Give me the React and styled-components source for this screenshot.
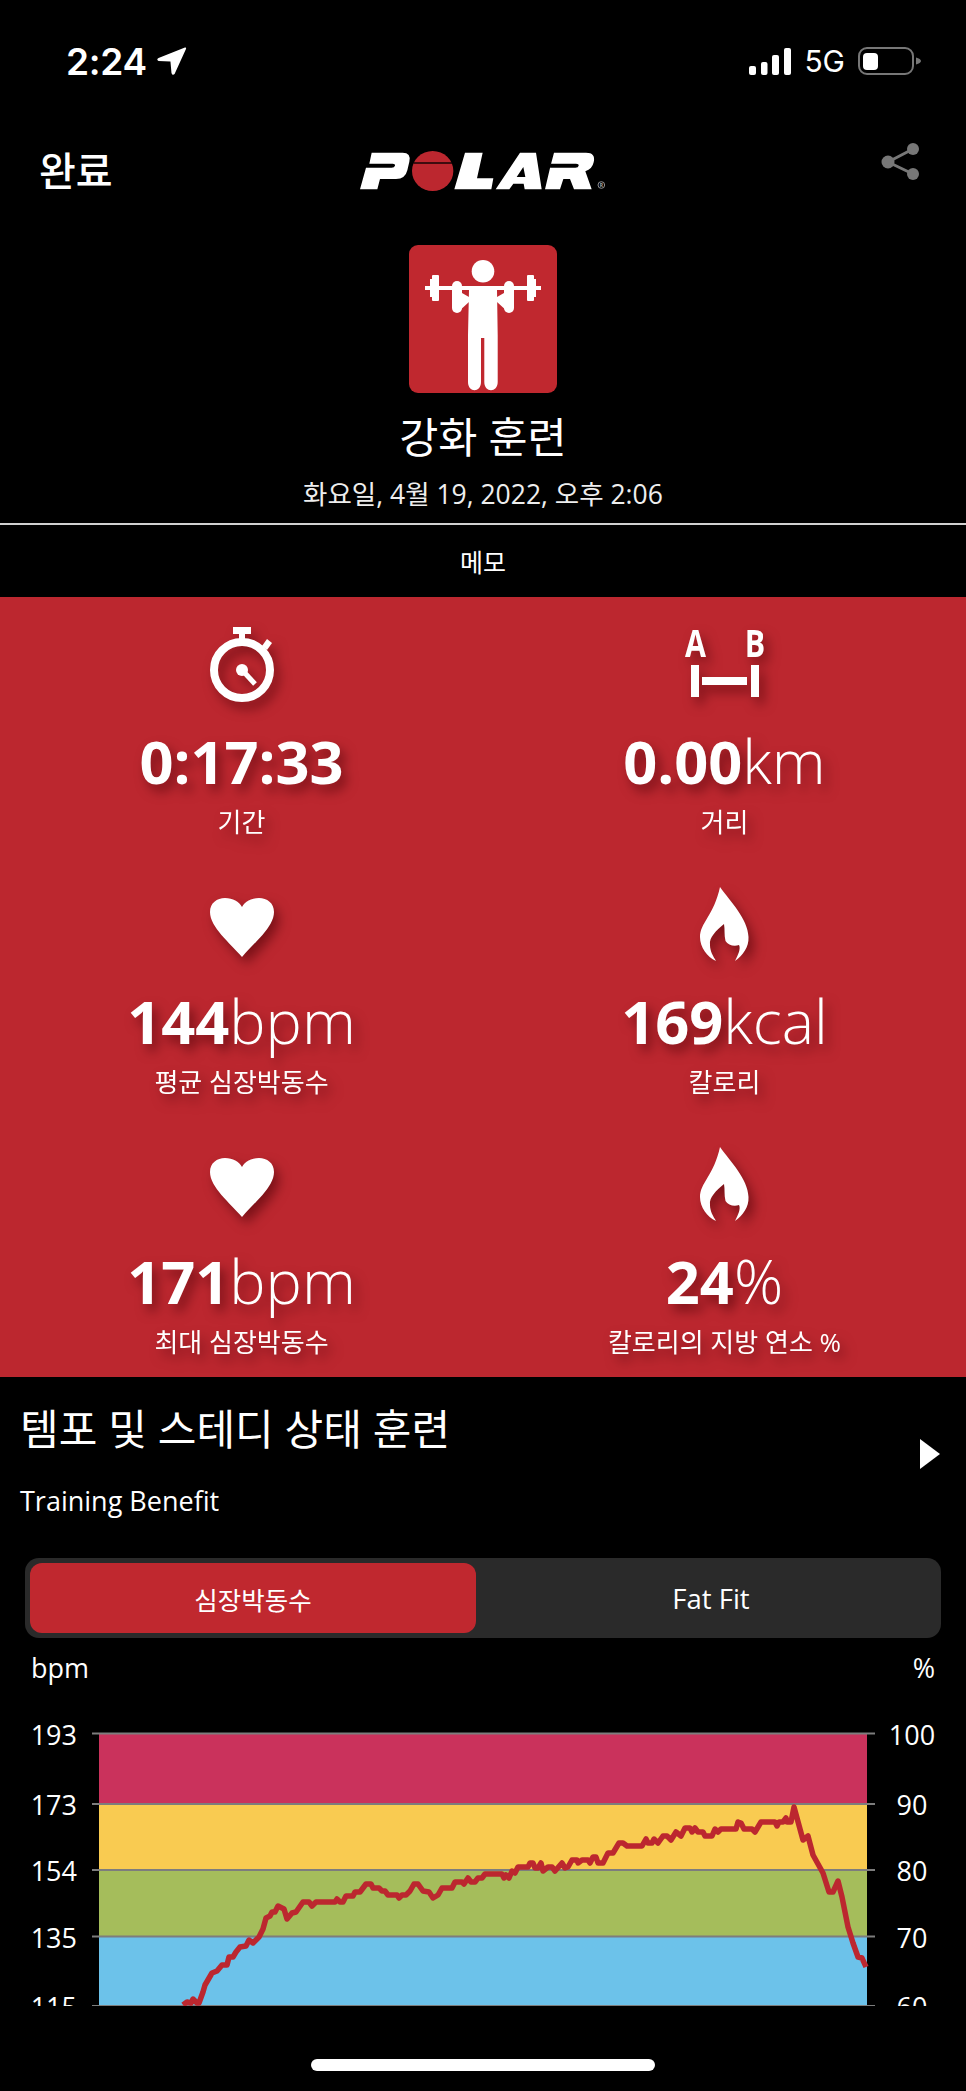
import React from 'react';
import styled, { createGlobalStyle } from 'styled-components';

const Global = createGlobalStyle`
  html, body { margin: 0; padding: 0; background: #000; }
  body { width: 966px; height: 2091px; overflow: hidden; font-family: "Open Sans", "Noto Sans CJK KR", sans-serif; color: #fff; }
`;
const Page = styled.div`width: 966px; height: 2091px; background: #000; overflow: hidden; position: relative;`;
const Status = styled.div`height: 122px; padding: 0 45px 0 66px; display: flex; justify-content: space-between; align-items: center; box-sizing: border-box;`;
const Clock = styled.div`display: flex; align-items: center; gap: 10px; font: 600 37px/1 Inter, sans-serif; letter-spacing: -.3px;`;
const StatusRight = styled.div`display: flex; align-items: center; gap: 13px; font: 400 30px/1 Inter, sans-serif;`;
const Nav = styled.div`height: 123px; box-sizing: border-box; padding: 0 47px 25px 39px; display: grid; grid-template-columns: 1fr auto 1fr; align-items: center;`;
const Done = styled.div`margin-bottom: 4px; font: 500 40px/1 "Noto Sans CJK KR", sans-serif;`;
const LogoMark = styled.svg`margin-left: 8px;`;
const ShareIcon = styled.svg`justify-self: end; margin-bottom: 20px;`;
const Hero = styled.div`display: flex; flex-direction: column; align-items: center;`;
const Tile = styled.div`width: 148px; height: 148px; border-radius: 9px; background: #c0282f; display: flex;`;
const Title = styled.div`margin-top: 18px; font: 400 42.500px/52px "Open Sans", "Noto Sans CJK KR", sans-serif;`;
const DateLine = styled.div`margin-top: 14px; font: 400 26.500px/34px "Open Sans", "Noto Sans CJK KR", sans-serif; color: #eee;`;
const Memo = styled.div`margin-top: 12px; border-top: 2px solid #d0d0d0; height: 72px; display: flex; align-items: center; justify-content: center; font-size: 25px;`;
const Panel = styled.div`height: 780px; background: #bc272f; display: grid; grid-template-columns: 483px 483px; grid-template-rows: 260px 260px 260px;`;
const Stat = styled.div`display: flex; flex-direction: column; align-items: center; filter: drop-shadow(5px 7px 6px rgba(70,0,5,.55));`;
const Glyph = styled.div`height: 134px; display: flex; align-items: center; justify-content: center;`;
const Value = styled.div`font: 300 61px/60px "Open Sans", sans-serif; white-space: nowrap;`;
const Strong = styled.b`font-weight: 700; font-size: 59.500px;`;
const Label = styled.div`margin-top: 14px; font: 400 26px/34px "Open Sans", "Noto Sans CJK KR", sans-serif;`;
const Benefit = styled.div`padding: 22px 21px 0 20px; display: flex; justify-content: space-between;`;
const BenefitText = styled.div`display: flex; flex-direction: column;`;
const BenefitTitle = styled.div`font: 400 42px/60px "Open Sans", "Noto Sans CJK KR", sans-serif;`;
const BenefitSub = styled.div`margin-top: 24px; font: 400 27px/36px "Open Sans", sans-serif;`;
const Arrow = styled.svg`margin-top: 40px; margin-right: 5px;`;
const Toggle = styled.div`margin: 39px 25px 0 25px; height: 80px; border-radius: 14px; background: #2a2a2a; padding: 5px; box-sizing: border-box; display: grid; grid-template-columns: 446px 1fr;`;
const Segment = styled.div`border-radius: 12px; display: flex; align-items: center; justify-content: center; font-size: 25.500px; background: #c0282f;`;
const SegmentOff = styled.div`display: flex; align-items: center; justify-content: center; padding-left: 10px; font-size: 27.500px;`;
const Units = styled.div`display: flex; justify-content: space-between; padding: 12px 31px 0 31px; font-size: 27px; line-height: 36px;`;
const Chart = styled.svg`display: block; margin-top: 28px;`;
const DistIcon = styled.svg`overflow: visible;`;
const HomeBar = styled.div`position: absolute; left: 311px; top: 2059px; width: 344px; height: 12px; border-radius: 6px; background: #fff;`;

const Sig = () => (
  <svg width="42" height="27" viewBox="0 0 42 27" fill="#fff">
    <rect x="0" y="18" width="7" height="9" rx="2"/><rect x="12" y="14" width="6.500" height="13" rx="2"/><rect x="23" y="7" width="7" height="20" rx="2"/><rect x="35" y="0" width="7" height="27" rx="2"/>
  </svg>
);
const Battery = () => (
  <svg width="63" height="28" viewBox="0 0 63 28">
    <rect x="1" y="1" width="54" height="26" rx="8" fill="none" stroke="#777" strokeWidth="2"/>
    <rect x="5" y="6" width="15" height="17" rx="4" fill="#fff"/>
    <path d="M58 10.500c3 1 5 2 5 3.500s-2 2.500-5 3.500z" fill="#777"/>
  </svg>
);
const Location = () => (
  <svg width="30" height="29" viewBox="0 0 29 28" fill="#fff"><path d="M27 .5 1.500 10.500Q-1 12 1.500 13.500L13 14l1 11q1 3 3 1L28 2q.5-2-1-1.500z"/></svg>
);
const Share = () => (
  <ShareIcon width="38" height="37" viewBox="0 0 38 37">
    <path d="M7 19 32 6M7 19l25 12" stroke="#777" strokeWidth="3" fill="none"/>
    <g fill="#777"><circle cx="7" cy="19" r="6.500"/><circle cx="32" cy="6" r="6"/><circle cx="32" cy="31" r="6"/></g>
  </ShareIcon>
);
const Logo = () => (
  <LogoMark width="247" height="40" viewBox="30 40 741 120" role="img" aria-label="Polar">
    <g fill="#fff" fillRule="evenodd">
      <path d="M65 45H158Q184 45 178 72L172 98Q166 124 138 124H90L82 155H30L48 90H125Q133 90 135 84Q136 78 128 78H58Z"/>
      <path d="M345 45H398L381 122H430L424 155H313Z"/>
      <path d="M510 45H558L575 155H524L521 138H490L478 155H437ZM520 88 500 118H526Z"/>
      <path d="M620 45H708Q738 45 731 74Q727 94 706 101L725 155H672L660 124H640L630 155H585L603 78H678Q687 78 686 84Q685 90 676 90H600L612 45Z"/>
    </g>
    <ellipse cx="248" cy="100" rx="62" ry="60" fill="#bc272f"/>
    <rect x="190" y="74" width="120" height="4" fill="#000"/>
    <circle cx="754" cy="142" r="10" fill="none" stroke="#aaa" strokeWidth="2.500"/>
    <text x="754" y="148" textAnchor="middle" fill="#aaa" style={{ font: '700 15px "Open Sans", sans-serif' }}>R</text>
  </LogoMark>
);
const Lifter = () => (
  <svg width="148" height="148" viewBox="0 0 148 148" fill="#fff">
    <circle cx="74" cy="26.300" r="11.300"/>
    <rect x="16" y="41" width="116" height="4"/>
    <rect x="23" y="30" width="7" height="26" rx="1"/><rect x="21" y="34" width="3" height="18"/>
    <rect x="118" y="30" width="7" height="26" rx="1"/><rect x="124" y="34" width="3" height="18"/>
    <path d="M60 45H88L88.700 90V137C88.700 148 75.300 148 75.300 137V93H72V137C72 148 59 148 59 137V90Z"/>
    <rect x="43" y="36" width="10" height="32" rx="5"/><rect x="95" y="36" width="10" height="32" rx="5"/>
    <path d="M53 48 60 52V57L49 67 45 60zM95 48 88 52V57L99 67 103 60z"/>
  </svg>
);
const Watch = () => (
  <svg width="64" height="75" viewBox="0 0 64 75" fill="#fff">
    <rect x="23" y="0" width="18" height="7"/><rect x="29" y="6" width="6" height="7"/>
    <path d="m52 19 5-7 5 4-5 7z"/>
    <circle cx="32" cy="43" r="28" fill="none" stroke="#fff" strokeWidth="8"/>
    <circle cx="32" cy="43" r="6"/><path d="m33 44 12 13" stroke="#fff" strokeWidth="5"/>
  </svg>
);
const AbLetter = styled.text`font: 700 38px "Open Sans", sans-serif; fill: #fff;`;
const Dist = () => (
  <DistIcon width="80" height="68" viewBox="0 0 80 68">
    <g transform="translate(10.500 0) scale(.8 1)"><AbLetter x="0" y="27" textAnchor="middle">A</AbLetter></g>
    <g transform="translate(70 0) scale(.8 1)"><AbLetter x="0" y="27" textAnchor="middle">B</AbLetter></g>
    <rect x="6" y="35" width="8" height="32" fill="#fff"/><rect x="17" y="47" width="45" height="8" fill="#fff"/><rect x="66" y="35" width="8" height="32" fill="#fff"/>
  </DistIcon>
);
const Heart = () => (
  <svg width="64" height="66" viewBox="0 0 64 66" fill="#fff">
    <path d="M32 66C20 52 0 36 0 21 0 12 7 7 15 7c8 0 14 3.500 17 9C35 10.500 41 7 49 7c8 0 15 5 15 14 0 15-20 31-32 45z"/>
  </svg>
);
const Flame = () => (
  <svg width="49" height="74" viewBox="0 0 49 74" fill="#fff">
    <path d="M20 0C30 14 48 32 48.500 50 49 60 43 68 35 74 38 68 41 62 39 58 34 60 28 58 25.500 54 24 48 25 42 24 37 16 44 9 50 10 58 10 64 13 69 16 74 7 70 0 60 0 50 0 36 14 28 20 0Z"/>
  </svg>
);

const hr = "183,2005 187,2002 191,2003 193,1999 197,2003 199,2003 203,1992 205,1985 212,1973 217,1971 222,1965 227,1965 229,1957 233,1957 236,1952 240,1947 246,1946 249,1940 253,1943 259,1937 263,1929 266,1918 270,1916 272,1912 275,1912 278,1906 284,1909 287,1919 292,1913 296,1912 303,1902 309,1902 312,1906 316,1902 335,1902 337,1899 340,1902 343,1902 346,1896 353,1896 355,1892 360,1892 366,1884 371,1884 373,1888 379,1888 382,1891 385,1891 388,1895 397,1895 399,1898 402,1895 406,1895 410,1891 414,1884 418,1884 423,1891 429,1892 433,1898 438,1895 442,1888 452,1888 455,1882 462,1882 464,1884 468,1878 471,1882 475,1882 478,1878 482,1878 485,1874 502,1874 504,1878 506,1875 509,1878 512,1871 515,1873 518,1867 528,1867 530,1863 533,1863 535,1868 538,1868 541,1863 543,1871 548,1867 552,1867 555,1871 562,1863 565,1868 568,1867 572,1860 577,1860 578,1863 582,1860 588,1860 590,1863 593,1857 596,1857 598,1863 603,1863 608,1853 613,1853 619,1843 623,1843 627,1846 642,1846 646,1839 648,1843 652,1843 654,1839 658,1843 663,1836 667,1836 671,1840 676,1832 681,1836 685,1828 690,1828 692,1832 695,1828 698,1832 703,1832 705,1836 712,1836 715,1829 718,1832 721,1829 736,1829 738,1822 741,1823 744,1829 752,1829 755,1832 761,1822 775,1822 777,1826 779,1822 783,1822 786,1818 787,1822 791,1822 794,1807 803,1840 808,1836 813,1855 823,1873 829,1892 833,1892 838,1881 842,1897 848,1927 853,1943 858,1957 862,1958 866,1967";

const zones = [
  { y: 1734, h: 70, c: '#ca325c' },
  { y: 1804, h: 66, c: '#f9cb51' },
  { y: 1870, h: 67, c: '#a5bd5b' },
  { y: 1937, h: 69, c: '#6cc2ea' },
];
const ticks = [
  { y: 1733.500, l: '193', r: '100' },
  { y: 1804, l: '173', r: '90' },
  { y: 1870, l: '154', r: '80' },
  { y: 1936.500, l: '135', r: '70' },
  { y: 2006, l: '115', r: '60' },
];
const AxisText = styled.text`font: 400 27px "Open Sans", sans-serif; fill: #fff;`;
const TOP = 1714;
const HrChart = () => (
  <Chart width="966" height={2006 - TOP} viewBox={`0 ${TOP} 966 ${2006 - TOP}`}>
    {zones.map(z => <rect key={z.y} x="99" y={z.y} width="768" height={z.h} fill={z.c} />)}
    {ticks.map(t => (
      <g key={t.y}>
        <path d={`M92 ${t.y}H875`} stroke="#7d7d7d" strokeWidth="2" />
        <AxisText x="77" y={t.y + 11} textAnchor="end">{t.l}</AxisText>
        <AxisText x="912" y={t.y + 11} textAnchor="middle">{t.r}</AxisText>
      </g>
    ))}
    <polyline points={hr} fill="none" stroke="#bc272f" strokeWidth="5.500" strokeLinejoin="round" />
  </Chart>
);

const stats = [
  { icon: <Watch />, v: '0:17:33', u: '', l: '기간' },
  { icon: <Dist />, v: '0.00', u: 'km', l: '거리' },
  { icon: <Heart />, v: '144', u: 'bpm', l: '평균 심장박동수' },
  { icon: <Flame />, v: '169', u: 'kcal', l: '칼로리' },
  { icon: <Heart />, v: '171', u: 'bpm', l: '최대 심장박동수' },
  { icon: <Flame />, v: '24', u: '%', l: '칼로리의 지방 연소 %' },
];

export default function App() {
  return (
    <Page>
      <Global />
      <Status>
        <Clock>2:24<Location /></Clock>
        <StatusRight><Sig />5G<Battery /></StatusRight>
      </Status>
      <Nav>
        <Done>완료</Done>
        <Logo />
        <Share />
      </Nav>
      <Hero>
        <Tile><Lifter /></Tile>
        <Title>강화 훈련</Title>
        <DateLine>화요일, 4월 19, 2022, 오후 2:06</DateLine>
      </Hero>
      <Memo>메모</Memo>
      <Panel>
        {stats.map(s => (
          <Stat key={s.l}>
            <Glyph>{s.icon}</Glyph>
            <Value><Strong>{s.v}</Strong>{s.u}</Value>
            <Label>{s.l}</Label>
          </Stat>
        ))}
      </Panel>
      <Benefit>
        <BenefitText>
          <BenefitTitle>템포 및 스테디 상태 훈련</BenefitTitle>
          <BenefitSub>Training Benefit</BenefitSub>
        </BenefitText>
        <Arrow width="20" height="30" viewBox="0 0 20 30"><path d="M0 0 20 15 0 30z" fill="#fff"/></Arrow>
      </Benefit>
      <Toggle>
        <Segment>심장박동수</Segment>
        <SegmentOff>Fat Fit</SegmentOff>
      </Toggle>
      <Units><span>bpm</span><span>%</span></Units>
      <HrChart />
      <HomeBar />
    </Page>
  );
}
